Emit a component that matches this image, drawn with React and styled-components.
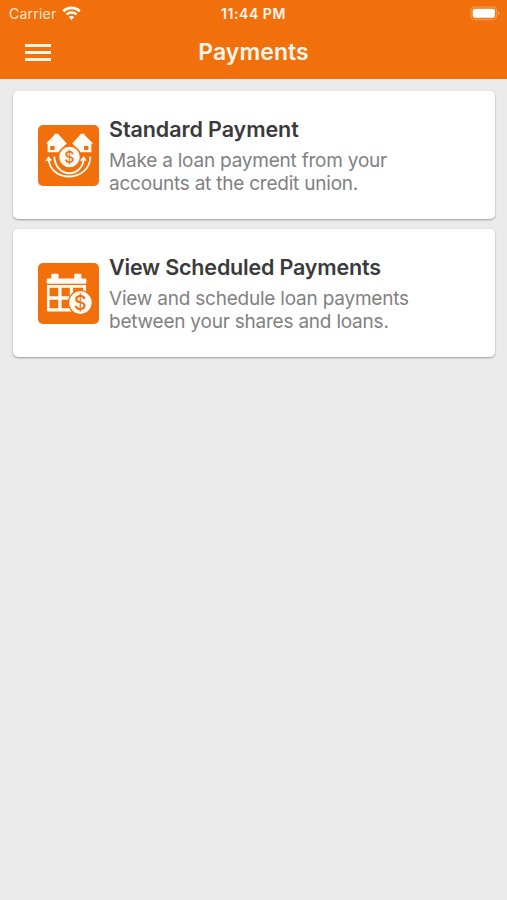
import React from 'react';
import styled, { createGlobalStyle } from 'styled-components';

const GlobalStyle = createGlobalStyle`
  * {
    box-sizing: border-box;
  }

  body {
    margin: 0;
    background: #ebebeb;
    font-family: Inter, 'Liberation Sans', sans-serif;
  }
`;

const Screen = styled.div`
  min-height: 900px;
  background: #ebebeb;
`;

const Header = styled.header`
  height: 79px;
  background: #f1700b;
  color: #fff5e8;
`;

const StatusBar = styled.div`
  display: grid;
  grid-template-columns: 1fr auto 1fr;
  align-items: center;
  height: 27px;
  padding: 0 7px;
`;

const Carrier = styled.div`
  display: flex;
  align-items: center;
  gap: 6px;
  padding-left: 2px;
  font-size: 14px;
  line-height: 18px;
  letter-spacing: 0.22px;
  color: #ffe6cf;
`;

const Clock = styled.div`
  font-size: 14px;
  font-weight: 600;
  line-height: 18px;
  letter-spacing: 0.55px;
`;

const Battery = styled.svg`
  justify-self: end;
`;

const NavBar = styled.div`
  display: grid;
  grid-template-columns: 1fr auto 1fr;
  align-items: center;
  height: 50px;
  padding: 0 25px;
`;

const MenuButton = styled.button`
  display: flex;
  flex-direction: column;
  gap: 4px;
  width: 26px;
  padding: 0;
  border: none;
  background: none;
  cursor: pointer;
`;

const MenuLine = styled.span`
  height: 3px;
  background: #fff2e2;
`;

const Title = styled.h1`
  margin: 0;
  font-size: 23px;
  font-weight: 600;
  line-height: 30px;
  letter-spacing: 0.08px;
`;

const CardList = styled.main`
  display: flex;
  flex-direction: column;
  gap: 10px;
  padding: 12px 12px 0 13px;
`;

const Card = styled.article`
  display: flex;
  align-items: center;
  gap: 10px;
  height: 128px;
  padding: 0 70px 0 25px;
  border-radius: 5px;
  background: white;
  box-shadow: 0 1px 2px rgba(0, 0, 0, 0.34);
`;

const Tile = styled.svg`
  flex: none;
  width: 61px;
  height: 61px;
`;

const CardTitle = styled.h2`
  margin: 0 0 7px;
  color: #3a3a3c;
  font-size: 21.5px;
  font-weight: 600;
  line-height: 26px;
  letter-spacing: ${(props) => props.$tracking};
`;

const CardText = styled.p`
  margin: 0;
  color: #818181;
  font-size: 19px;
  line-height: 23px;
  letter-spacing: ${(props) => props.$tracking};
`;

const CardBody = styled.div`
  width: 320px;
  white-space: pre-line;
`;

const WifiIcon = () => (
  <svg width="19" height="15" viewBox="0 0 19 15" fill="none" stroke="#fffaf0">
    <path d="M1.2 5.2C5.8.8 13.2.8 17.8 5.2" strokeWidth="2.6" />
    <path d="M4.4 8.5c2.8-2.7 7.4-2.7 10.2 0" strokeWidth="2.4" />
    <path d="M6.7 11.1c1.6-1.4 4-1.4 5.6 0L9.5 14z" fill="#fffaf0" stroke="none" />
  </svg>
);

const LoanIcon = () => (
  <Tile viewBox="22 20.5 184 184">
    <rect x="22" y="20.5" width="184" height="184" rx="15" fill="#f1700b" />
    <g fill="#fffaf3">
      <path d="M46 76 72 50V47H82L109 76 92 92 84 103H51V77Z" />
      <path d="M188 76 162 50V47H152L125 76 142 92 150 103H183V77Z" />
    </g>
    <path d="M59 84h13v12H59zM161 84h13v12h-13z" fill="#f1700b" />
    <circle cx="117" cy="117" r="33" fill="#fffaf3" stroke="#f1700b" strokeWidth="4" />
    <text
      x="117"
      y="134"
      textAnchor="middle"
      fontFamily="Inter, sans-serif"
      fontSize="48"
      fontWeight="500"
      fill="#f1700b"
    >
      $
    </text>
    <g fill="none" stroke="#fffaf3" strokeWidth="5.5">
      <path d="M54 120C56 195 178 195 180 116" />
      <path d="M71 116C75 182 157 182 160 120" />
      <path d="m47 129 7-10 8 9M151 129l9-10 6 9" />
    </g>
  </Tile>
);

const CalendarIcon = () => (
  <Tile viewBox="22 20.5 184 184">
    <rect x="22" y="20.5" width="184" height="184" rx="15" fill="#f1700b" />
    <g fill="#fffaf3">
      <rect x="62" y="53" width="22" height="18" rx="3" />
      <rect x="131" y="53" width="22" height="18" rx="3" />
      <rect x="48" y="67" width="120" height="16" rx="4" />
      <path d="M49 87h118v80H53q-4 0-4-4z" />
    </g>
    <path d="M57 95h26v26H57zM93 95h25v26H93zM128 95h30v26h-30zM57 131h26v26H57zM93 131h25v26H93z" fill="#f1700b" />
    <circle cx="150" cy="140" r="36" fill="#fffaf3" stroke="#f1700b" strokeWidth="4" />
    <text
      x="150"
      y="161"
      textAnchor="middle"
      fontFamily="Inter, sans-serif"
      fontSize="59"
      fontWeight="500"
      fill="#f1700b"
    >
      $
    </text>
  </Tile>
);

const options = [
  {
    id: 'standard',
    icon: LoanIcon,
    title: 'Standard Payment',
    text: 'Make a loan payment from your\naccounts at the credit union.',
    titleTracking: '-0.08px',
    textTracking: '-0.22px'
  },
  {
    id: 'scheduled',
    icon: CalendarIcon,
    title: 'View Scheduled Payments',
    text: 'View and schedule loan payments\nbetween your shares and loans.',
    titleTracking: '-0.18px',
    textTracking: '-0.22px'
  }
];

const App = () => {
  return (
    <Screen>
      <GlobalStyle />
      <Header>
        <StatusBar>
          <Carrier>
            Carrier
            <WifiIcon />
          </Carrier>
          <Clock>11:44 PM</Clock>
          <Battery width="30" height="15" viewBox="0 0 30 15">
            <rect x="1" y="1" width="25.5" height="12.5" rx="3.5" fill="none" stroke="#f69245" strokeWidth="1.3" />
            <rect x="2.7" y="2.7" width="22.3" height="9.1" rx="2" fill="white" />
            <path d="M28 5q2.5 2.2 0 4.5z" fill="#f9a25e" />
          </Battery>
        </StatusBar>
        <NavBar>
          <MenuButton aria-label="Menu">
            <MenuLine />
            <MenuLine />
            <MenuLine />
          </MenuButton>
          <Title>Payments</Title>
        </NavBar>
      </Header>

      <CardList>
        {options.map(({ id, icon: Icon, title, text, titleTracking, textTracking }) => (
          <Card key={id}>
            <Icon />
            <CardBody>
              <CardTitle $tracking={titleTracking}>{title}</CardTitle>
              <CardText $tracking={textTracking}>{text}</CardText>
            </CardBody>
          </Card>
        ))}
      </CardList>
    </Screen>
  );
};

export default App;
